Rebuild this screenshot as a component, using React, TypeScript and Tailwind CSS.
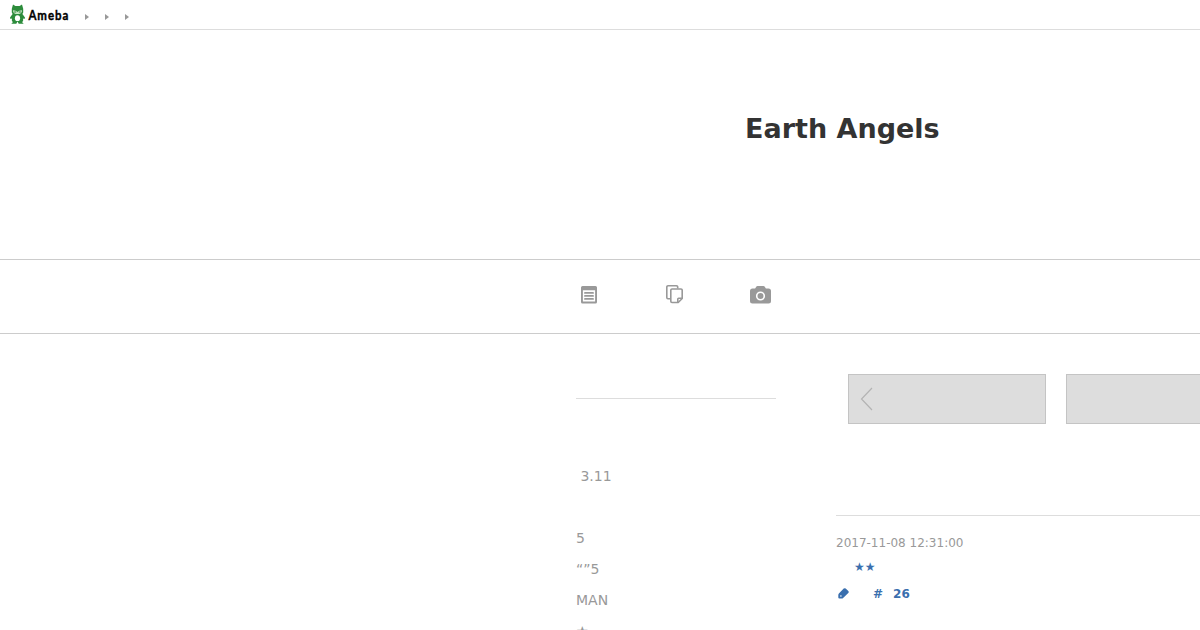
interface LinkItem {
    label: string;
    className: string;
}

const themes: LinkItem[] = [
    { label: "3.11", className: "pl-[4.4px]" },
    { label: "", className: "" },
    { label: "5", className: "" },
    { label: "“”5", className: "" },
    { label: "MAN", className: "" },
    { label: "★", className: "" },
];

function AmebaMark() {
    return (
        <svg width="15" height="20" viewBox="0 0 15 20" className="-mt-[2px] shrink-0">
            <path
                d="M3 .4 5.4 2h4.200L12 .4l1.200 4.400v3.600l-.8 1.600 2.600 3.400-.5 1.600-1.500-.4.2 2-1 1.600 1.500 1.600H8.700L7.500 17.400l-1.200 2.400H1.300l1.500-1.600-1-1.600.2-2-1.500.4-.5-1.600L2.600 10l-.8-1.600V4.800z"
                fill="#2d8c3c"
            />
            <path d="M3 6.400c1.600-.2 3.200.6 4.500 1.700 1.300-1.100 2.900-1.900 4.500-1.700.1 2.300-1.700 3.700-4.500 3.700S2.900 8.700 3 6.400z" fill="#c5e5c3" />
            <path d="M4.200 8h2M8.800 8h2" stroke="#2d7c3a" strokeWidth="1" />
            <ellipse cx="7.500" cy="14.200" rx="2.600" ry="2.900" fill="#fff" />
        </svg>
    );
}

function ListIcon() {
    return (
        <svg width="16" height="18" viewBox="0 0 16 18" className="-ml-[0.5px]">
            <path fillRule="evenodd" d="M1.500 0h13A1.500 1.500 0 0 1 16 1.500v14.500a1.500 1.500 0 0 1-1.500 1.500h-13A1.500 1.500 0 0 1 0 16V1.500A1.500 1.500 0 0 1 1.500 0zM1.900 4.200v11.400h12.200V4.200z" fill="#999" />
            <path d="M4 6.900h8M4 9.900h8M4 12.900h8" stroke="#999" strokeWidth="1.900" strokeLinecap="round" />
        </svg>
    );
}

function PagesIcon() {
    return (
        <svg width="18" height="19" viewBox="0 0 18 19" fill="none" stroke="#999" strokeWidth="1.600" strokeLinejoin="round">
            <path d="M4.500 13.700H2A1.200 1.200 0 0 1 .8 12.500V2A1.200 1.200 0 0 1 2 .8h8.500A1.200 1.200 0 0 1 11.700 2v1.500" />
            <path d="M6 4h9a1.200 1.200 0 0 1 1.200 1.200v8.300l-4 4H6a1.200 1.200 0 0 1-1.200-1.200V5.200A1.200 1.200 0 0 1 6 4z" />
            <path d="M11.800 17.300v-3.200a.8.8 0 0 1 .8-.8h3.600" />
        </svg>
    );
}

function CameraIcon() {
    return (
        <svg width="21" height="18" viewBox="0 0 21 18">
            <path d="M7.500 0h6q.7 0 1.100.6l1.300 1.900h2.600a2.500 2.500 0 0 1 2.500 2.500v10a2.500 2.500 0 0 1-2.500 2.500h-16A2.500 2.500 0 0 1 0 15V5a2.500 2.500 0 0 1 2.500-2.500h2.600L6.400.6Q6.800 0 7.500 0z" fill="#999" />
            <circle cx="10.500" cy="10" r="3.800" fill="none" stroke="#fff" strokeWidth="1.600" />
        </svg>
    );
}

function TagIcon() {
    return (
        <svg width="11" height="11" viewBox="0 0 11 11" className="-mt-px">
            <path d="M5.700.6q1-.9 2 0l2.600 2.400q.9.900 0 1.900l-5.200 5q-.6.600-1.300.6H1.400Q.3 10.500.3 9.400V7q0-.8.600-1.400z" fill="#3a6fae" />
            <circle cx="2.900" cy="8" r=".8" fill="#fff" />
        </svg>
    );
}

function PagerButton({ arrow }: { arrow?: boolean }) {
    return (
        <button type="button" className="flex h-[50px] w-[198px] shrink-0 items-center border border-[#c4c4c4] bg-[#ddd] pl-[11px]">
            {arrow && (
                <svg width="13" height="24" viewBox="0 0 13 24" fill="none" stroke="#b3b3b3" strokeWidth="1.200">
                    <path d="M12 1 1.500 12 12 23" />
                </svg>
            )}
        </button>
    );
}

export default function App() {
    return (
        <div className="h-[630px] w-[1200px] overflow-hidden bg-white font-['DejaVu_Sans',sans-serif] text-[#999]">
            <header className="flex h-[30px] items-center border-b border-[#ddd] pl-[10px]">
                <a className="flex h-full w-[75px] items-center gap-[3px]">
                    <AmebaMark />
                    <svg width="42" height="20" viewBox="0 0 42 20" className="shrink-0 overflow-visible">
                        <g transform="scale(0.85 1)">
                            <text x="0.500" y="15" textLength="47" lengthAdjust="spacing" className="fill-black stroke-black stroke-[0.4px] font-['Lato',sans-serif] text-[13.5px] font-bold">Ameba</text>
                        </g>
                    </svg>
                </a>
                <nav className="flex gap-4 pt-[4px]">
                    {[0, 1, 2].map((i) => (
                        <svg key={i} width="4" height="6" viewBox="0 0 4 6">
                            <path d="M0 0 4 3 0 6z" fill="#999" />
                        </svg>
                    ))}
                </nav>
            </header>

            <div className="h-[230px] border-b border-[#ccc] pl-[745px] pt-[82px]">
                <h1 className="text-[27px] leading-[34px] font-bold whitespace-nowrap text-[#333]">Earth Angels</h1>
            </div>

            <nav className="flex h-[74px] border-b border-[#ccc] pl-[581px] pt-[26px]">
                <a className="w-[85px]"><ListIcon /></a>
                <a className="-mt-px w-[84px]"><PagesIcon /></a>
                <a><CameraIcon /></a>
            </nav>

            <div className="flex pl-[576px]">
                <aside className="w-[200px] shrink-0 pt-[64px]">
                    <div className="h-[63px] border-t border-[#ddd]" />
                    <ul className="text-[14px] leading-[31px]">
                        {themes.map((t, i) => (
                            <li key={i} className={`h-[31px] ${t.className}`}>{t.label}</li>
                        ))}
                    </ul>
                </aside>

                <main className="ml-[60px] w-[460px] shrink-0 pt-[40px]">
                    <div className="flex gap-5 pl-3">
                        <PagerButton arrow />
                        <PagerButton />
                    </div>
                    <article className="mt-[91px] border-t border-[#ddd] pt-[18px] text-[12px]">
                        <time className="block h-[18px] leading-[18px]">2017-11-08 12:31:00</time>
                        <p className="mt-[6px] h-[18px] pl-[18px] leading-[18px] font-bold text-[#3a6fae]">★★</p>
                        <p className="mt-[9px] flex h-[18px] items-center pl-[2px] leading-[18px] font-bold text-[#3a6fae]">
                            <TagIcon />
                            <span className="ml-6">#</span>
                            <span className="ml-[10px]">26</span>
                        </p>
                    </article>
                </main>
            </div>
        </div>
    );
}
